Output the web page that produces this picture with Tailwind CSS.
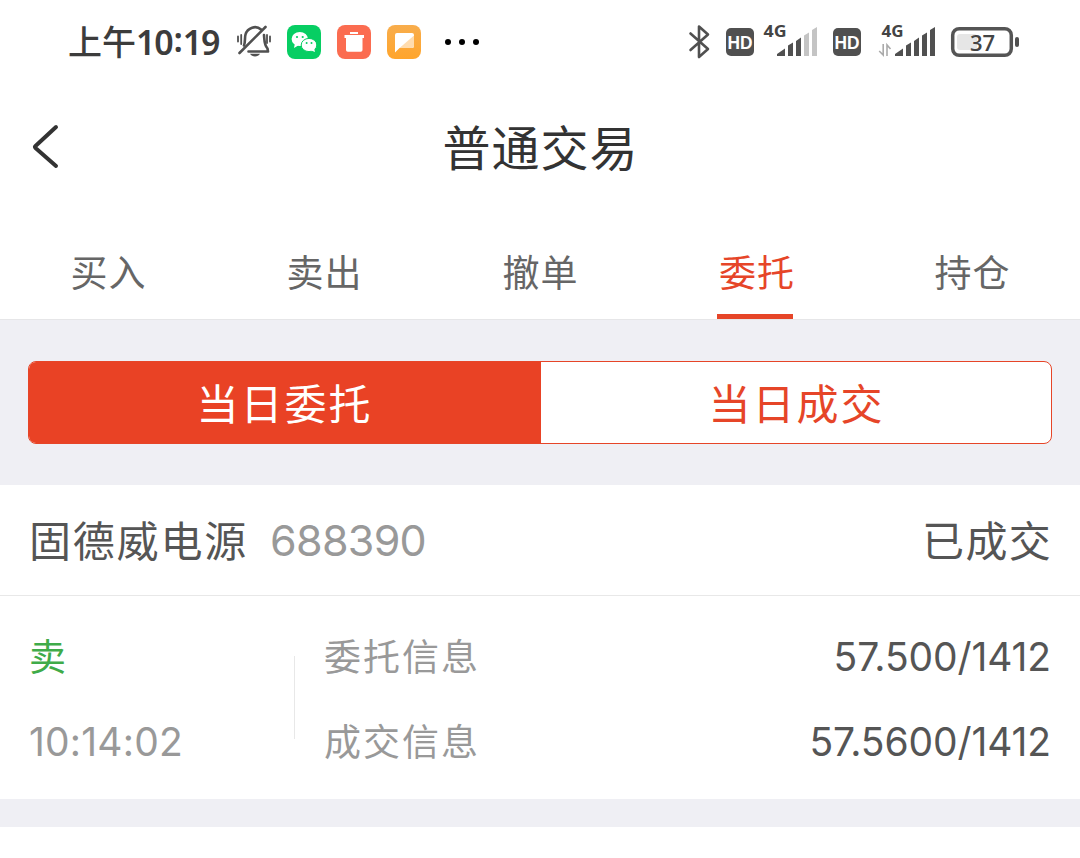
<!DOCTYPE html>
<html lang="zh-CN">
<head>
    <meta charset="UTF-8">
    <meta name="viewport" content="width=device-width, initial-scale=1.0">
    <title>普通交易</title>
    <script src="https://cdn.jsdelivr.net/npm/@tailwindcss/browser@4"></script>
</head>
<body class="bg-white w-[1080px] h-[858px] overflow-hidden font-['Inter','Noto_Sans_CJK_SC',sans-serif]">
    <!-- status bar -->
    <div class="h-[84px] pl-[68px] pr-[60px] flex items-center justify-between">
        <div class="flex items-center">
            <div class="flex items-center w-[168px] text-[#3c3c3c] leading-none whitespace-nowrap">
                <span class="text-[34px] font-medium pt-[2px]">上午</span>
                <span class="font-['Noto_Sans',sans-serif] text-[34px] font-semibold tracking-[-1.2px]">10<span class="inline-block -translate-y-[3px] px-[1px]">:</span>19</span>
            </div>
            <svg class="w-[36px] h-[36px]" viewBox="0 0 36 36" fill="none" stroke="#505050" stroke-width="2.6" stroke-linecap="round" stroke-linejoin="round">
                <path d="M8 21.500C9.500 18 8.500 14 9.500 10.500C11.500 3.500 20 1 25 5.500M28 11C28.500 16 28 20.500 31.500 24.500L32 27.500H12.500"/>
                <path d="M29.500 3L3.500 29"/>
                <path d="M2 12.500v5M5.200 11v9M31 11v8M34 12.500v5" stroke-width="1.800"/>
                <path d="M14 29.800h10c-2 3.500-8 3.500-10 0z" fill="#505050" stroke="none"/>
            </svg>
            <svg class="w-[34px] h-[34px] ml-[15px]" viewBox="0 0 34 34">
                <rect width="34" height="34" rx="8" fill="#07ce63"/>
                <ellipse cx="12.800" cy="14" rx="8.200" ry="7" fill="#fff"/>
                <path d="M8 18l-1 5 5-3z" fill="#fff"/>
                <ellipse cx="22" cy="20" rx="7.800" ry="6.600" fill="#fff" stroke="#07ce63" stroke-width="1"/>
                <path d="M23 25l5 2-1-4z" fill="#fff"/>
                <g fill="#07ce63"><circle cx="10" cy="12" r="1.100"/><circle cx="15.700" cy="12" r="1.100"/><circle cx="19.600" cy="18" r="1"/><circle cx="24.500" cy="18" r="1"/></g>
            </svg>
            <svg class="w-[34px] h-[34px] ml-[16px]" viewBox="0 0 34 34">
                <rect width="34" height="34" rx="8" fill="#fb6c50"/>
                <path d="M13 7h8v2h-8zM7.500 10h19.500v3H25.500v12a1.800 1.800 0 0 1-1.800 1.800H10.800A1.800 1.800 0 0 1 9 25V13H7.500z" fill="#fff"/>
            </svg>
            <svg class="w-[34px] h-[34px] ml-[16px]" viewBox="0 0 34 34">
                <defs>
                    <linearGradient id="amber" x1="0" y1="0" x2="0" y2="1"><stop offset="0" stop-color="#f8ad4c"/><stop offset="1" stop-color="#ffa52c"/></linearGradient>
                </defs>
                <rect width="34" height="34" rx="8" fill="url(#amber)"/>
                <path d="M10 8h15a2 2 0 0 1 2 2v11a2 2 0 0 1-2 2H12.500L8 27.500V10a2 2 0 0 1 2-2z" fill="#fff"/>
                <path d="M27 10.500V21a2 2 0 0 1-2 2H12.500z" fill="#ffdcae"/>
            </svg>
            <div class="flex gap-2 ml-[24px]">
                <i class="size-1.5 rounded-full bg-black"></i>
                <i class="size-1.5 rounded-full bg-black"></i>
                <i class="size-1.5 rounded-full bg-black"></i>
            </div>
        </div>
        <svg class="w-[332px] h-[64px]" viewBox="688 10 332 64" fill="#505050">
            <!-- bluetooth -->
            <path d="M690.500 33.500L708 49L699 57V26.500L708 34.500L690.500 50" fill="none" stroke="#505050" stroke-width="2.600" stroke-linejoin="round" stroke-linecap="round"/>
            <rect x="726" y="28" width="28" height="28" rx="5"/>
            <text x="740" y="48.500" text-anchor="middle" fill="#fff" textLength="25" lengthAdjust="spacingAndGlyphs" font-family="Liberation Sans" font-weight="700" font-size="18">HD</text>
            <text x="763.500" y="37" textLength="23" lengthAdjust="spacingAndGlyphs" font-family="Open Sans" font-weight="700" font-size="16" fill="#444">4G</text>
            <path d="M777 56v-2l8-5.500V56zM788 56V45.500l5-3V56zM796 56V41l5-3.500V56z"/>
            <path d="M804 56V35.500l5-3V56zM812 56V30l5-3V56z" fill="#c4c4c4"/>
            <rect x="833" y="28" width="28" height="28" rx="5"/>
            <text x="847" y="48.500" text-anchor="middle" fill="#fff" textLength="25" lengthAdjust="spacingAndGlyphs" font-family="Liberation Sans" font-weight="700" font-size="18">HD</text>
            <text x="881.500" y="37" textLength="22" lengthAdjust="spacingAndGlyphs" font-family="Open Sans" font-weight="700" font-size="16" fill="#444">4G</text>
            <path d="M883.200 44v11l-4-4M887 56V45l3.500 4" fill="none" stroke="#aaa" stroke-width="1.600"/>
            <path d="M895 56v-2l8-5.500V56zM906 56V45.500l5-3V56zM914 56V41l5-3.500V56zM922 56V35.500l5-3V56zM930 56V30l5-3V56z"/>
            <rect x="952.700" y="28.700" width="58.600" height="26.600" rx="6.500" fill="none" stroke="#555" stroke-width="3.500"/>
            <rect x="957" y="34" width="20" height="16" rx="3" fill="#e6e6e6"/>
            <rect x="1015" y="37" width="4" height="10" rx="2"/>
            <text x="982.500" y="50.500" text-anchor="middle" font-family="Open Sans" font-weight="600" font-size="22" fill="#444">37</text>
        </svg>
    </div>

    <!-- title bar -->
    <div class="h-[134px] flex items-center px-[30px] pb-[9px]">
        <svg class="w-[30px] h-[46px]" viewBox="0 0 30 46" fill="none" stroke="#333" stroke-width="4" stroke-linecap="round" stroke-linejoin="round"><path d="M26 3L5.500 22Q4.500 23 5.500 24L26 42"/></svg>
        <h1 class="flex-1 text-center text-[48px] leading-[60px] tracking-[1px] text-[#333] pt-[4px] pr-[29px]">普通交易</h1>
    </div>

    <!-- tabs -->
    <nav class="h-[102px] grid grid-cols-5 justify-items-center text-[37px] tracking-[1px] text-[#666] leading-[112px] border-b border-[#e6e6e8]">
        <span class="pl-px">买入</span>
        <span class="pl-px">卖出</span>
        <span class="pl-px">撤单</span>
        <span class="h-[101px] w-[76px] -ml-[2px] pl-[2px] whitespace-nowrap text-[#e64528] border-b-[5px] border-[#e64528]">委托</span>
        <span class="pl-px">持仓</span>
    </nav>

    <main class="bg-[#efeff4] h-[507px]">
        <div class="h-[165px] px-[28px] pt-[41px]">
            <div class="h-[83px] flex border border-[#e64528] rounded-[8px] overflow-hidden bg-white text-[42px] tracking-[2px] leading-[86px] text-center">
                <div class="w-[512px] bg-[#e94225] text-white pr-px">当日委托</div>
                <div class="flex-1 text-[#e64528] pl-px">当日成交</div>
            </div>
        </div>

        <section class="bg-white h-[314px] text-[#555]">
            <div class="h-[111px] border-b border-[#e8e8e8] px-[29px] pt-[2px] flex items-center text-[42px]">
                <span class="tracking-[1.8px]">固德威电源</span>
                <span class="ml-[22px] pb-[2px] text-[43px] font-normal tracking-[-0.7px] text-[#999]">688390</span>
                <span class="ml-auto tracking-[1.3px] -mr-px">已成交</span>
            </div>
            <div class="h-[203px] flex px-[29px] text-[37px] leading-[85px]">
                <div class="w-[265px] pt-[19px] text-[#999]">
                    <div class="text-[#3fab49]">卖</div>
                    <div class="text-[39px] leading-[84px] tracking-[0.2px]">10:14:02</div>
                </div>
                <div class="w-px h-[83px] mt-[60px] bg-[#e8e8e8]"></div>
                <div class="pl-[29px] pt-[19px] tracking-[2px] text-[#999]">
                    <div>委托信息</div>
                    <div>成交信息</div>
                </div>
                <div class="ml-auto pt-[18px] text-right text-[39px] tracking-[-0.1px]">
                    <div>57.500/1412</div>
                    <div>57.5600/1412</div>
                </div>
            </div>
        </section>
    </main>
</body>
</html>
